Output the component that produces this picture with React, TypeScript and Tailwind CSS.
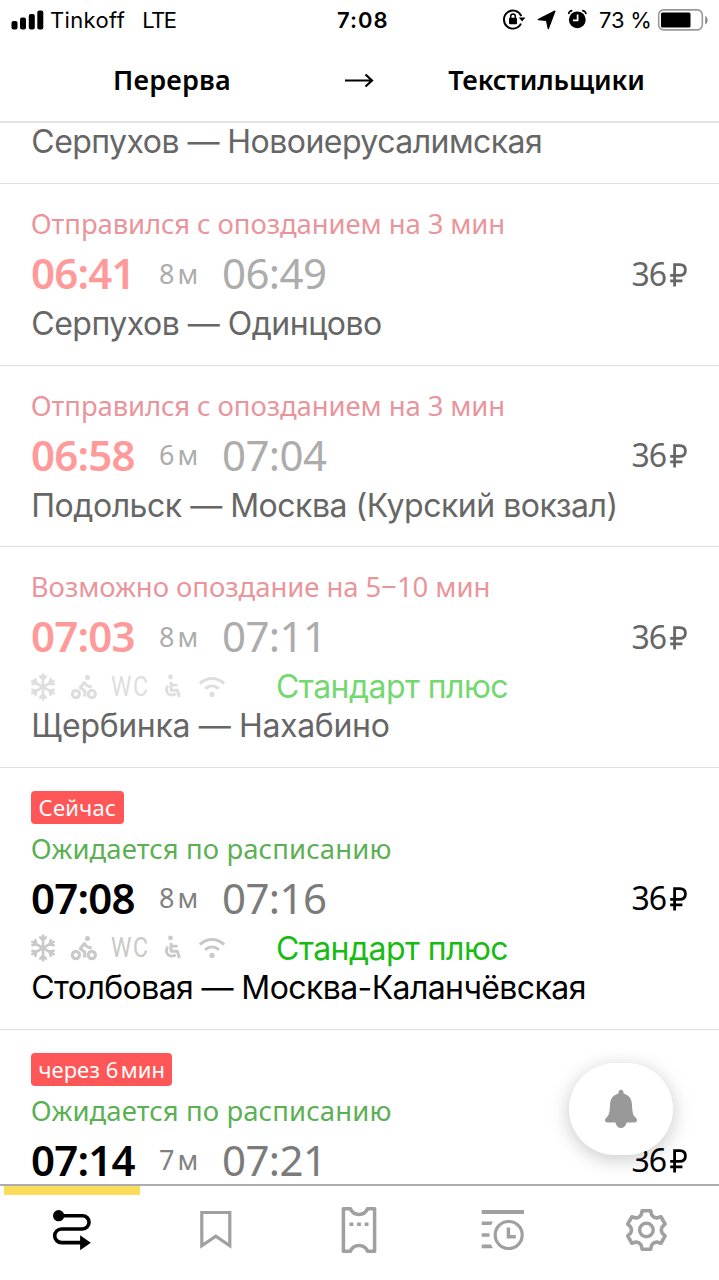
import React from "react";

type Train = {
  badge?: string;
  status: string;
  statusTracking: string;
  dep: string;
  dur: string;
  arr: string;
  route?: string;
  routeTracking?: string;
  plus?: boolean;
  past?: boolean;
};

const trains: Train[] = [
  { status: "Отправился с опозданием на 3 мин", statusTracking: "tracking-[-0.1px]", dep: "06:41", dur: "8", arr: "06:49", route: "Серпухов — Одинцово", routeTracking: "tracking-[-0.5px]", past: true },
  { status: "Отправился с опозданием на 3 мин", statusTracking: "tracking-[-0.1px]", dep: "06:58", dur: "6", arr: "07:04", route: "Подольск — Москва (Курский вокзал)", routeTracking: "tracking-[-0.48px]", past: true },
  { status: "Возможно опоздание на 5−10 мин", statusTracking: "tracking-[-0.06px]", dep: "07:03", dur: "8", arr: "07:11", route: "Щербинка — Нахабино", routeTracking: "tracking-[-0.34px]", past: true, plus: true },
  { badge: "Сейчас", status: "Ожидается по расписанию", statusTracking: "tracking-[0.1px]", dep: "07:08", dur: "8", arr: "07:16", route: "Столбовая — Москва-Каланчёвская", routeTracking: "tracking-[-0.6px]", plus: true },
  { badge: "через 6\u200aмин", status: "Ожидается по расписанию", statusTracking: "tracking-[0.1px]", dep: "07:14", dur: "7", arr: "07:21" },
];

const noto = "font-['Noto_Sans',sans-serif]";
const inter = "font-['Inter',sans-serif]";

function StatusBar() {
  return (
    <div className={`${inter} flex h-[40px] items-center text-[22px] leading-[40px] text-black`}>
      <div className="flex w-[300px] items-center pl-[11px]">
        <svg width="33" height="20" viewBox="0 0 33 20" fill="#000">
          <rect x="0.5" y="11" width="6" height="8.5" rx="2" />
          <rect x="9" y="7.5" width="6" height="12" rx="2" />
          <rect x="17.8" y="4" width="6" height="15.5" rx="2" />
          <rect x="26.3" y="0.5" width="6" height="19" rx="2" />
        </svg>
        <span className="ml-[6px] tracking-[0.35px]">Tinkoff</span>
        <span className="ml-[17px] tracking-[-1.5px]">LTE</span>
      </div>
      <span className="w-[126px] pl-[37px] font-semibold tracking-[1px]">7:08</span>
      <svg className="ml-[74px]" width="90" height="24" viewBox="500 8 90 24" fill="none" stroke="#000" strokeWidth="1.9">
        <path d="M521.3 16.2A9 9 0 1 0 521 23.6" />
        <path d="M518.8 17.5h6.6l-3.3 4z" fill="#000" stroke="none" />
        <rect x="509" y="17.8" width="8" height="6.4" rx="1" fill="#000" stroke="none" />
        <path d="M510.7 18v-1.4a2.3 2.5 0 0 1 4.6 0V18" strokeWidth="1.5" />
        <path d="M554.8 11.2 548.3 28.6 546.6 20.4 538.3 19.6z" fill="#000" strokeWidth="1.4" strokeLinejoin="round" />
        <circle cx="577.3" cy="19.8" r="8.4" fill="#000" stroke="none" />
        <path d="M577.6 14.5v5.9h-4.600" stroke="#fff" strokeWidth="1.7" />
        <path d="M568.6 14.2a4 4 0 0 1 3.8-3.600M586 14.2a4 4 0 0 0-3.800-3.600" strokeWidth="1.6" />
      </svg>
      <span className="ml-[9px] tracking-[-0.2px]">73 %</span>
      <svg className="absolute left-[657px] top-[8px]" width="52" height="24" viewBox="0 0 52 24">
        <rect x="1.7" y="1.9" width="43.6" height="20" rx="5" fill="none" stroke="#999" strokeWidth="1.6" />
        <rect x="4" y="4.4" width="29.5" height="15" rx="1.5" fill="#000" />
        <path d="M48.2 8v8.4c1.6-.8 2.4-2.4 2.4-4.2s-.8-3.4-2.4-4.2z" fill="#888" />
      </svg>
    </div>
  );
}

function Features({ past }: { past?: boolean }) {
  return (
    <div className="flex h-[39px] items-center pt-[2px]">
      <div className={`flex w-[246px] items-center ${past ? "text-[#dedede]" : "text-[#c9c9c9]"}`}>
        <svg width="26" height="28" viewBox="-13 -14 26 28" fill="none" stroke="currentColor" strokeWidth="2.6" strokeLinecap="round">
          {[0, 60, 120, 180, 240, 300].map((a) => (
            <path key={a} d="M0 0V-12.4M-2.9-10.6 0-7.6 2.9-10.6" transform={`rotate(${a})`} />
          ))}
        </svg>
        <svg className="ml-[14px]" width="27" height="26" viewBox="69.500 935 27 26" fill="none" stroke="currentColor" strokeWidth="3.100">
          <circle cx="75.4" cy="955" r="3.6" />
          <circle cx="91.3" cy="955" r="3.600" />
          <circle cx="87" cy="938.400" r="2.500" fill="currentColor" stroke="none" />
          <path d="M84.200 957.500v-5.400l-4.400-3.600 4.200-4.900c1.600 3.100 3.700 4.200 7.200 4.200" strokeLinejoin="round" />
        </svg>
        <span className="ml-[14px] inline-block w-[37px] origin-left scale-x-[.82] font-['Roboto',sans-serif] text-[28px] leading-[38px] tracking-[2px]">WC</span>
        <svg className="ml-[14px]" width="22" height="26" viewBox="162 935.500 22 26" fill="none" stroke="currentColor" strokeWidth="2.900">
          <circle cx="170.500" cy="938.400" r="2.300" fill="currentColor" stroke="none" />
          <path d="M171 943.500v8.200h6.400l2 6.800M171 946.600h6.500" strokeLinejoin="round" />
          <path d="M168 947.300a5.400 5.400 0 1 0 7.600 7.800" />
        </svg>
        <svg className="ml-[14px]" width="28" height="22" viewBox="198 937 28 22" fill="none" stroke="currentColor" strokeWidth="3">
          <path d="M199.800 944.600c7.200-6.800 17.200-6.800 24.400 0M205 949.800c4.200-3.800 9.800-3.800 14 0" />
          <circle cx="212" cy="955.400" r="2.600" fill="currentColor" stroke="none" />
        </svg>
      </div>
      <span className={`${inter} text-[32px] leading-[39px] tracking-[-0.55px] ${past ? "text-[#72d86f]" : "text-[#18bb12]"}`}>Стандарт плюс</span>
    </div>
  );
}

function Route({ text, past, tracking }: { text: string; past?: boolean; tracking?: string }) {
  return (
    <div className={`${inter} relative top-px whitespace-nowrap pl-[1.3px] text-[32px] leading-[40px] ${tracking} ${past ? "text-[#666]" : "text-black"}`}>{text}</div>
  );
}

function Row({ t }: { t: Train }) {
  const { past } = t;
  const height = t.badge ? "h-[262px]" : t.plus ? "h-[221px]" : "h-[181.5px]";
  return (
    <div className={`${height} shrink-0 border-b border-[#e2e2e2] pl-[30px] pr-[32px] pt-[20px]`}>
      {t.badge && (
        <div className="flex h-[40.5px] items-center pb-[2px]">
          <span className={`${noto} ml-[1px] h-[33px] rounded-[4px] bg-[#ff5757] px-[7.5px] text-[22px] leading-[33px] text-white ${t.badge === "Сейчас" ? "tracking-[0.3px]" : "tracking-[0.05px]"}`}>{t.badge}</span>
        </div>
      )}
      <div className={`${noto} whitespace-nowrap pl-[0.8px] text-[27.5px] leading-[39px] ${t.statusTracking} ${past ? "text-[#e9959b]" : "text-[#5cb054]"}`}>{t.status}</div>
      <div className={`${noto} flex h-[60px] items-center leading-[60px]`}>
        <span className={`w-[129px] pl-px text-[42px] font-semibold tracking-[-0.8px] ${past ? "text-[#ff9a9a]" : "text-black"}`}>{t.dep}</span>
        <span className={`flex w-[63px] gap-[3px] pt-px text-[27px] ${past ? "text-[#acacac]" : "text-[#808080]"}`}>
          <span>{t.dur}</span>
          <span>м</span>
        </span>
        <span className={`text-[42px] tracking-[-0.6px] ${past ? "text-[#acacac]" : "text-[#7b7b7b]"}`}>{t.arr}</span>
        <span className={`ml-auto flex gap-[4px] pt-px text-[32px] ${past ? "text-[#666]" : "text-black"}`}>
          <span className="tracking-[-1.100px]">36</span>
          <svg className="mt-[19px]" width="17" height="24" viewBox="0 0 17 24" fill="none" stroke="currentColor" strokeWidth="2.8">
            <path d="M4.6 23.4V1.6h5.2c3.8 0 5.600 2 5.600 5.300s-2 5.400-5.800 5.400H.2M.2 17.800h12.200" />
          </svg>
        </span>
      </div>
      {t.plus && <Features past={past} />}
      {t.route && <Route text={t.route} past={past} tracking={t.routeTracking} />}
    </div>
  );
}

const gear = Array.from({ length: 6 }, (_, i) => {
  const a = (i * Math.PI) / 3;
  return [[-7.3, -13], [-5.3, -15], [-4.2, -19.2], [4.2, -19.2], [5.3, -15], [7.3, -13]]
    .map(([x, y]) => `${(x * Math.cos(a) - y * Math.sin(a)).toFixed(2)},${(x * Math.sin(a) + y * Math.cos(a)).toFixed(2)}`)
    .join(" ");
}).join(" ");

function Tab({ active, children }: { active?: boolean; children: React.ReactNode }) {
  return (
    <div className="flex flex-1 flex-col items-center">
      <div className={`h-[9px] w-[136px] ${active ? "bg-[#fddb5b]" : ""}`} />
      <svg className={`mt-[11px] ${active ? "text-black" : "text-[#a0a0a0]"}`} width="48" height="48" viewBox="0 0 48 48" fill="none" stroke="currentColor" strokeWidth="3.2">
        {children}
      </svg>
    </div>
  );
}

export default function App() {
  return (
    <div className="relative flex h-[1280px] w-[719px] flex-col overflow-hidden bg-white">
      <StatusBar />
      <header className={`${noto} flex h-[83px] shrink-0 items-center border-b-2 border-[#e2e2e2] text-[27px] font-semibold text-black`}>
        <span className="w-[344px] text-center tracking-[0.2px]">Перерва</span>
        <svg className="-mt-[2px]" width="30" height="16" viewBox="0 0 30 16" fill="none" stroke="#000" strokeWidth="2.2">
          <path d="M1 8.5h27M21.500 2.500l6.500 6-6.500 6" />
        </svg>
        <span className="flex-1 text-center tracking-[-0.1px]">Текстильщики</span>
      </header>
      <main className="flex min-h-0 flex-1 flex-col overflow-hidden">
        <div className="-mt-[2px] h-[63px] shrink-0 border-b border-[#e2e2e2] pl-[30px]">
          <Route text="Серпухов — Новоиерусалимская" tracking="tracking-[-0.54px]" past />
        </div>
        {trains.map((t) => (
          <Row key={t.dep} t={t} />
        ))}
      </main>
      <nav className="flex h-[96px] shrink-0 border-t-2 border-[#adadad] bg-white">
        <Tab active>
          <circle cx="10.6" cy="9.7" r="5.6" fill="currentColor" stroke="none" />
          <path d="M10.6 9.7h23.8a6.65 6.65 0 0 1 0 13.3H13.5a6.8 6.8 0 0 0 0 13.6H33" strokeWidth="3.6" />
          <path d="M32.1 29.2 42.8 36.7 32.1 44.2z" fill="currentColor" stroke="none" />
        </Tab>
        <Tab>
          <path d="M9.8 6.5h28V39.7L23.8 30.2 9.8 39.7z" />
        </Tab>
        <Tab>
          <path d="M8.4 2.8h7c1.5 3.5 5 5.700 8.600 5.700s7.100-2.200 8.600-5.700h7v42.400h-7c-1.500-3.500-5-5.700-8.600-5.700s-7.100 2.200-8.600 5.700h-7z" strokeWidth="3.5" strokeLinejoin="round" />
          <path d="M14.5 18.3h3.8M22.1 18.3h3.8M29.7 18.3h3.8" strokeWidth="3.6" />
        </Tab>
        <Tab>
          <path d="M2.7 6h42.3" strokeWidth="3.8" />
          <path d="M2.7 15.4h11.2l-1.8 3.6H2.7zM2.7 27.2h7.8v3.6H2.7zM2.7 38.6h9.4l1.8 3.6H2.7z" fill="currentColor" stroke="none" />
          <circle cx="29.7" cy="29" r="13.5" />
          <path d="M29.4 21.6v9.200h7.400" strokeWidth="3.4" />
        </Tab>
        <Tab>
          <g transform="translate(23.4 24)">
            <polygon points={gear} strokeLinejoin="round" strokeWidth="3.6" />
            <circle r="6.8" strokeWidth="3.4" />
          </g>
        </Tab>
      </nav>
      <button className="absolute left-[569px] top-[1063px] flex h-[92px] w-[104px] items-center justify-center rounded-full bg-white shadow-[0_4px_20px_rgba(0,0,0,0.22)]">
        <svg width="34" height="40" viewBox="604 1089 34 40" fill="#999">
          <path d="M621 1089.8c1.700 0 2.600 1.200 2.600 3.800 5 1.400 8 5 8.300 10.400.400 7 .800 10 2.500 12.300 1 1.600 2.600 2 2.600 4 0 1.400-1 2.100-2.400 2.100h-8c-.600 3.500-2.800 5.600-5.600 5.600s-5-2.100-5.600-5.600h-8c-1.400 0-2.400-.700-2.400-2.100 0-2 1.600-2.400 2.600-4 1.700-2.300 2.100-5.300 2.500-12.300.300-5.400 3.300-9 8.300-10.400 0-2.600.900-3.800 2.600-3.800z" />
        </svg>
      </button>
    </div>
  );
}
